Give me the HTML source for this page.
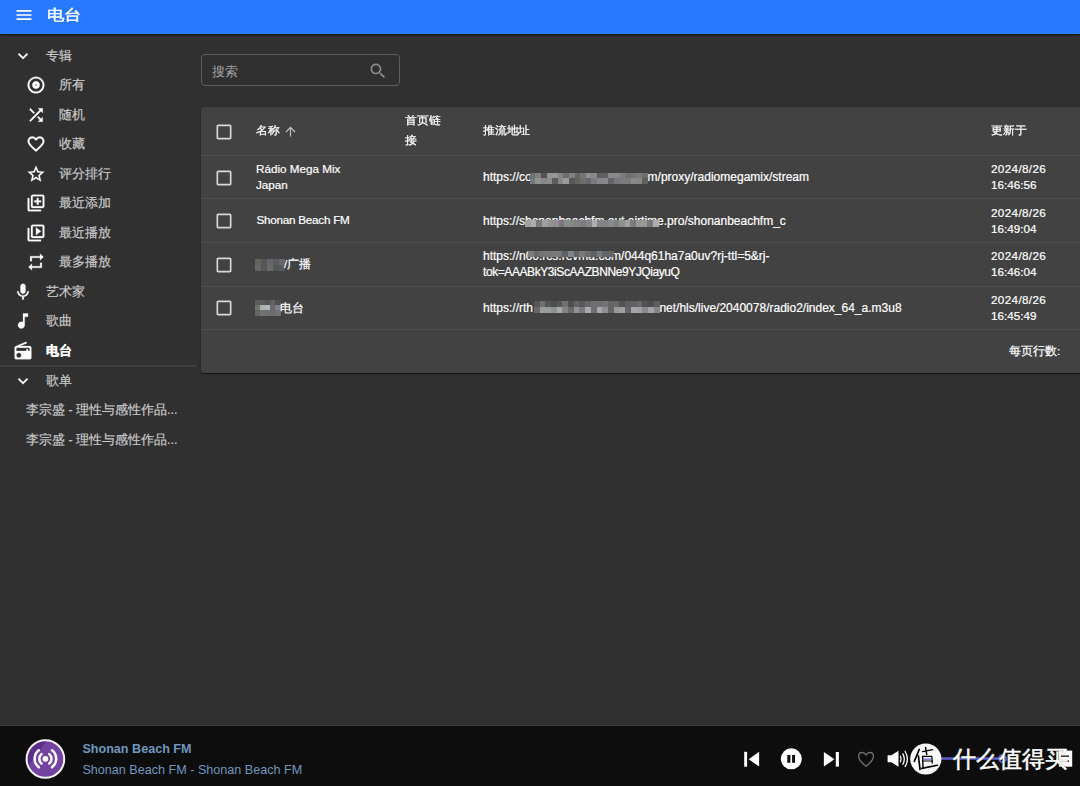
<!DOCTYPE html>
<html><head><meta charset="utf-8">
<style>
*{box-sizing:border-box;margin:0;padding:0}
html,body{width:1080px;height:786px;overflow:hidden;background:#303030;font-family:"Liberation Sans",sans-serif;color:#fff}
.abs{position:absolute}
svg{display:block}
#appbar{position:absolute;left:0;top:0;width:1080px;height:34px;background:#2979ff;border-bottom:1px solid #2a85ff;box-shadow:0 1px 1.5px rgba(20,12,0,.9)}
.side-t{position:absolute;font-size:12.8px;color:#c8c8c8;white-space:nowrap;line-height:16px;-webkit-text-stroke:0.2px #c8c8c8}
.ico{position:absolute;width:20px;height:20px;fill:#fff;stroke:#fff;stroke-width:0.3}
#paper{position:absolute;left:201px;top:106.8px;width:890px;height:266.2px;background:#424242;border-radius:3px;box-shadow:0 2px 1px -1px rgba(0,0,0,.3),0 1px 1px 0 rgba(0,0,0,.24),0 1px 3px 0 rgba(0,0,0,.2)}
.hl{position:absolute;left:201px;width:880px;height:1.6px;background:#4d4d4d}
.cell{position:absolute;font-size:11.7px;line-height:16.2px;color:#fff;white-space:nowrap;-webkit-text-stroke:0.2px #fff}
.url{position:absolute;font-size:12px;line-height:16.2px;color:#fff;white-space:nowrap;-webkit-text-stroke:0.2px #fff}
.dt{letter-spacing:0.35px}
.hdr{position:absolute;font-size:10.9px;line-height:20px;color:#fff;white-space:nowrap;-webkit-text-stroke:0.25px #fff;margin-top:-0.4px;transform:scaleX(1.075);transform-origin:0 0}
.cb{position:absolute;width:20px;height:20px;fill:#d8d8d8}
.mos i{position:absolute;display:block;filter:blur(0.4px)}
#player{position:absolute;left:0;top:725px;width:1080px;height:61px;background:#0d0d0d;border-top:1px solid #3b3b3b}
</style></head><body>
<div id="appbar">
  <svg class="abs" style="left:13.7px;top:4.7px" width="20" height="20" viewBox="0 0 24 24"><path fill="#fff" d="M3 18h18v-2H3v2zm0-5h18v-2H3v2zm0-7v2h18V6H3z"/></svg>
  <div class="abs" style="left:46.8px;top:5px;font-size:15.3px;line-height:20px;color:#fff;-webkit-text-stroke:0.45px #fff;transform:scaleX(1.16);transform-origin:0 0">电台</div>
</div>

<!-- sidebar -->
<svg class="ico" style="left:13px;top:45.6px" viewBox="0 0 24 24"><path d="M16.59 8.59L12 13.17 7.41 8.59 6 10l6 6 6-6z"/></svg>
<div class="side-t" style="left:46px;top:47.5px">专辑</div>

<svg class="ico" style="left:26px;top:75.3px" viewBox="0 0 24 24"><path d="M12 2C6.48 2 2 6.48 2 12s4.48 10 10 10 10-4.48 10-10S17.52 2 12 2zm0 18c-4.41 0-8-3.590-8-8s3.59-8 8-8 8 3.59 8 8-3.59 8-8 8zm0-12.5c-2.49 0-4.5 2.01-4.5 4.5s2.01 4.5 4.5 4.5 4.5-2.01 4.5-4.5-2.01-4.5-4.5-4.5zm0 5.5c-.55 0-1-.45-1-1s.45-1 1-1 1 .45 1 1-.45 1-1 1z"/></svg>
<div class="side-t" style="left:59px;top:77px">所有</div>

<svg class="ico" style="left:26px;top:104.8px" viewBox="0 0 24 24"><path d="M10.59 9.17L5.41 4 4 5.41l5.17 5.17 1.42-1.41zM14.5 4l2.04 2.04L4 18.59 5.41 20 17.96 7.46 20 9.5V4h-5.5zm.33 9.41l-1.41 1.41 3.13 3.13L14.5 20H20v-5.5l-2.04 2.04-3.13-3.130z"/></svg>
<div class="side-t" style="left:59px;top:106.5px">随机</div>

<svg class="ico" style="left:26px;top:134.3px" viewBox="0 0 24 24"><path d="M16.5 3c-1.74 0-3.410.81-4.5 2.09C10.91 3.81 9.24 3 7.5 3 4.42 3 2 5.42 2 8.5c0 3.78 3.4 6.86 8.55 11.54L12 21.35l1.45-1.32C18.6 15.36 22 12.28 22 8.5 22 5.420 19.58 3 16.5 3zm-4.4 15.55l-.1.1-.1-.1C7.14 14.24 4 11.39 4 8.5 4 6.5 5.5 5 7.5 5c1.54 0 3.04.99 3.57 2.36h1.87C13.46 5.99 14.96 5 16.5 5c2 0 3.5 1.5 3.5 3.5 0 2.89-3.14 5.74-7.9 10.05z"/></svg>
<div class="side-t" style="left:59px;top:136px">收藏</div>

<svg class="ico" style="left:26px;top:163.8px" viewBox="0 0 24 24"><path d="M22 9.24l-7.19-.62L12 2 9.19 8.63 2 9.24l5.46 4.73L5.82 21 12 17.27 18.18 21l-1.63-7.03L22 9.24zM12 15.4l-3.76 2.27 1-4.28-3.32-2.88 4.38-.38L12 6.1l1.71 4.04 4.38.38-3.32 2.88 1 4.28L12 15.4z"/></svg>
<div class="side-t" style="left:59px;top:165.5px">评分排行</div>

<svg class="ico" style="left:26px;top:193.3px" viewBox="0 0 24 24"><path d="M4 6H2v14c0 1.1.9 2 2 2h14v-2H4V6zm16-4H8c-1.1 0-2 .9-2 2v12c0 1.1.9 2 2 2h12c1.1 0 2-.9 2-2V4c0-1.1-.9-2-2-2zm0 14H8V4h12v12zm-7-2h2v-3h3V9h-3V6h-2v3h-3v2h3z"/></svg>
<div class="side-t" style="left:59px;top:195px">最近添加</div>

<svg class="ico" style="left:26px;top:222.8px" viewBox="0 0 24 24"><path d="M4 6H2v14c0 1.1.9 2 2 2h14v-2H4V6zm16-4H8c-1.1 0-2 .9-2 2v12c0 1.1.9 2 2 2h12c1.1 0 2-.9 2-2V4c0-1.1-.9-2-2-2zm0 14H8V4h12v12zM12 5.5v9l6-4.5z"/></svg>
<div class="side-t" style="left:59px;top:224.5px">最近播放</div>

<svg class="ico" style="left:26px;top:252.3px" viewBox="0 0 24 24"><path d="M7 7h10v3l4-4-4-4v3H5v6h2V7zm10 10H7v-3l-4 4 4 4v-3h12v-6h-2v4z"/></svg>
<div class="side-t" style="left:59px;top:254px">最多播放</div>

<svg class="ico" style="left:13px;top:281.8px" viewBox="0 0 24 24"><path d="M12 14c1.66 0 2.99-1.34 2.99-3L15 5c0-1.66-1.34-3-3-3S9 3.34 9 5v6c0 1.66 1.34 3 3 3zm5.3-3c0 3-2.54 5.1-5.3 5.1S6.7 14 6.7 11H5c0 3.41 2.72 6.23 6 6.72V21h2v-3.28c3.28-.48 6-3.3 6-6.72h-1.7z"/></svg>
<div class="side-t" style="left:46px;top:283.5px">艺术家</div>

<svg class="ico" style="left:13px;top:311.3px" viewBox="0 0 24 24"><path d="M12 3v10.55c-.59-.34-1.27-.55-2-.55-2.21 0-4 1.79-4 4s1.79 4 4 4 4-1.79 4-4V7h4V3h-6z"/></svg>
<div class="side-t" style="left:46px;top:313px">歌曲</div>

<svg class="ico" style="left:13px;top:340.8px" viewBox="0 0 24 24"><path d="M3.24 6.15C2.51 6.43 2 7.17 2 8v12c0 1.1.89 2 2 2h16c1.11 0 2-.9 2-2V8c0-1.11-.89-2-2-2H8.3l8.26-3.34L15.88 1 3.24 6.15zM7 20c-1.66 0-3-1.34-3-3s1.34-3 3-3 3 1.34 3 3-1.34 3-3 3zm13-8h-2v-2h-2v2H4V8h16v4z"/></svg>
<div class="side-t" style="left:46px;top:342.7px;color:#fff;font-weight:bold;font-size:13.4px;-webkit-text-stroke:0.2px #fff">电台</div>

<div class="abs" style="left:0;top:364.8px;width:197px;height:2.2px;background:#3c3c3c"></div>

<svg class="ico" style="left:13px;top:370.5px" viewBox="0 0 24 24"><path d="M16.59 8.59L12 13.17 7.41 8.59 6 10l6 6 6-6z"/></svg>
<div class="side-t" style="left:46px;top:372.5px">歌单</div>

<div class="side-t" style="left:26px;top:402px;font-size:12.5px">李宗盛 - 理性与感性作品...</div>
<div class="side-t" style="left:26px;top:431.5px;font-size:12.5px">李宗盛 - 理性与感性作品...</div>

<!-- search -->
<div class="abs" style="left:201px;top:54.2px;width:198.6px;height:32.3px;border:1px solid #5e5e5e;border-radius:4px"></div>
<div class="abs" style="left:212px;top:63.5px;font-size:13.3px;line-height:16px;color:#a5a5a5">搜索</div>
<svg class="abs" style="left:368px;top:61px" width="20" height="20" viewBox="0 0 24 24"><path fill="#9a9a9a" stroke="#2f2f2f" stroke-width="0.35" d="M15.5 14h-.79l-.28-.27C15.41 12.59 16 11.11 16 9.5 16 5.91 13.09 3 9.5 3S3 5.91 3 9.5 5.91 16 9.5 16c1.61 0 3.09-.59 4.23-1.57l.27.28v.79l5 4.99L20.49 19l-4.99-5zm-6 0C7.01 14 5 11.99 5 9.5S7.01 5 9.5 5 14 7.01 14 9.5 11.99 14 9.5 14z"/></svg>

<!-- table -->
<div id="paper"></div>
<div class="hl" style="top:154.8px"></div>
<div class="hl" style="top:197.9px"></div>
<div class="hl" style="top:241.7px"></div>
<div class="hl" style="top:285.5px"></div>
<div class="hl" style="top:328.9px"></div>

<svg class="cb" style="left:214px;top:121.8px" viewBox="0 0 24 24"><path d="M19 5v14H5V5h14m0-2H5c-1.1 0-2 .9-2 2v14c0 1.1.9 2 2 2h14c1.1 0 2-.9 2-2V5c0-1.1-.9-2-2-2z"/></svg>
<div class="hdr" style="left:256px;top:120.5px">名称</div>
<svg class="abs" style="left:283.3px;top:124px" width="15" height="15" viewBox="0 0 24 24"><path fill="#bdbdbd" d="M4 12l1.41 1.41L11 7.83V20h2V7.83l5.58 5.59L20 12l-8-8-8 8z"/></svg>
<div class="hdr" style="left:405px;top:110.5px;white-space:normal;width:36px">首页链接</div>
<div class="hdr" style="left:483px;top:120.5px">推流地址</div>
<div class="hdr" style="left:991px;top:120.5px">更新于</div>

<svg class="cb" style="left:214px;top:167.5px" viewBox="0 0 24 24"><path d="M19 5v14H5V5h14m0-2H5c-1.1 0-2 .9-2 2v14c0 1.1.9 2 2 2h14c1.1 0 2-.9 2-2V5c0-1.1-.9-2-2-2z"/></svg>
<div class="cell" style="left:256px;top:161px">Rádio Mega Mix<br>Japan</div>
<div class="url" style="left:483px;top:169px">https://co</div>
<div class="url" style="left:647.6px;top:169px">m/proxy/radiomegamix/stream</div>
<div class="mos"><i style="left:529.6px;top:172.6px;width:6.1px;height:6.1px;background:#6f6f6e"></i><i style="left:535.2px;top:172.6px;width:6.1px;height:6.1px;background:#807f7e"></i><i style="left:540.8px;top:172.6px;width:6.1px;height:6.1px;background:#545153"></i><i style="left:546.5px;top:172.6px;width:6.1px;height:6.1px;background:#94949b"></i><i style="left:552.1px;top:172.6px;width:6.1px;height:6.1px;background:#98969a"></i><i style="left:557.7px;top:172.6px;width:6.1px;height:6.1px;background:#848582"></i><i style="left:563.3px;top:172.6px;width:6.1px;height:6.1px;background:#6f6b73"></i><i style="left:568.9px;top:172.6px;width:6.1px;height:6.1px;background:#837e80"></i><i style="left:574.6px;top:172.6px;width:6.1px;height:6.1px;background:#676562"></i><i style="left:580.2px;top:172.6px;width:6.1px;height:6.1px;background:#797378"></i><i style="left:585.8px;top:172.6px;width:6.1px;height:6.1px;background:#8d8e90"></i><i style="left:591.4px;top:172.6px;width:6.1px;height:6.1px;background:#86888b"></i><i style="left:597.0px;top:172.6px;width:6.1px;height:6.1px;background:#605e5f"></i><i style="left:602.6px;top:172.6px;width:6.1px;height:6.1px;background:#615f63"></i><i style="left:608.3px;top:172.6px;width:6.1px;height:6.1px;background:#8a8989"></i><i style="left:613.9px;top:172.6px;width:6.1px;height:6.1px;background:#868889"></i><i style="left:619.5px;top:172.6px;width:6.1px;height:6.1px;background:#7d7d80"></i><i style="left:625.1px;top:172.6px;width:6.1px;height:6.1px;background:#6c6f6b"></i><i style="left:630.7px;top:172.6px;width:6.1px;height:6.1px;background:#747573"></i><i style="left:636.4px;top:172.6px;width:6.1px;height:6.1px;background:#7a7a78"></i><i style="left:642.0px;top:172.6px;width:6.1px;height:6.1px;background:#6d6e6d"></i><i style="left:529.6px;top:178.2px;width:6.1px;height:6.1px;background:#76767e"></i><i style="left:535.2px;top:178.2px;width:6.1px;height:6.1px;background:#8f9191"></i><i style="left:540.8px;top:178.2px;width:6.1px;height:6.1px;background:#87868b"></i><i style="left:546.5px;top:178.2px;width:6.1px;height:6.1px;background:#8e8b8a"></i><i style="left:552.1px;top:178.2px;width:6.1px;height:6.1px;background:#5b5b58"></i><i style="left:557.7px;top:178.2px;width:6.1px;height:6.1px;background:#878688"></i><i style="left:563.3px;top:178.2px;width:6.1px;height:6.1px;background:#9a9c9c"></i><i style="left:568.9px;top:178.2px;width:6.1px;height:6.1px;background:#585658"></i><i style="left:574.6px;top:178.2px;width:6.1px;height:6.1px;background:#636360"></i><i style="left:580.2px;top:178.2px;width:6.1px;height:6.1px;background:#6e6d70"></i><i style="left:585.8px;top:178.2px;width:6.1px;height:6.1px;background:#6a656b"></i><i style="left:591.4px;top:178.2px;width:6.1px;height:6.1px;background:#7c7b81"></i><i style="left:597.0px;top:178.2px;width:6.1px;height:6.1px;background:#85888b"></i><i style="left:602.6px;top:178.2px;width:6.1px;height:6.1px;background:#88898c"></i><i style="left:608.3px;top:178.2px;width:6.1px;height:6.1px;background:#636568"></i><i style="left:613.9px;top:178.2px;width:6.1px;height:6.1px;background:#777978"></i><i style="left:619.5px;top:178.2px;width:6.1px;height:6.1px;background:#7b7a81"></i><i style="left:625.1px;top:178.2px;width:6.1px;height:6.1px;background:#7c7a79"></i><i style="left:630.7px;top:178.2px;width:6.1px;height:6.1px;background:#8b8988"></i><i style="left:636.4px;top:178.2px;width:6.1px;height:6.1px;background:#868685"></i><i style="left:642.0px;top:178.2px;width:6.1px;height:6.1px;background:#5e5e5f"></i></div>
<div class="cell" style="left:991px;top:161px"><span style="letter-spacing:0.35px">2024/8/26</span><br>16:46:56</div>

<svg class="cb" style="left:214px;top:211px" viewBox="0 0 24 24"><path d="M19 5v14H5V5h14m0-2H5c-1.1 0-2 .9-2 2v14c0 1.1.9 2 2 2h14c1.1 0 2-.9 2-2V5c0-1.1-.9-2-2-2z"/></svg>
<div class="cell" style="left:256.5px;top:211.7px;letter-spacing:-0.25px">Shonan Beach FM</div>
<div class="url" style="left:483px;top:212.5px">https://shonanbeachfm.out.airtime.pro/shonanbeachfm_c</div>
<div class="mos"><i style="left:525.4px;top:219.5px;width:6.0px;height:7.5px;background:#9ea1a2"></i><i style="left:530.9px;top:219.5px;width:6.0px;height:7.5px;background:#acadb0"></i><i style="left:536.4px;top:219.5px;width:6.0px;height:7.5px;background:#7c797a"></i><i style="left:542.0px;top:219.5px;width:6.0px;height:7.5px;background:#9e9fa0"></i><i style="left:547.5px;top:219.5px;width:6.0px;height:7.5px;background:#8f9290"></i><i style="left:553.0px;top:219.5px;width:6.0px;height:7.5px;background:#918d91"></i><i style="left:558.5px;top:219.5px;width:6.0px;height:7.5px;background:#7a767c"></i><i style="left:564.1px;top:219.5px;width:6.0px;height:7.5px;background:#878c8d"></i><i style="left:569.6px;top:219.5px;width:6.0px;height:7.5px;background:#858581"></i><i style="left:575.1px;top:219.5px;width:6.0px;height:7.5px;background:#818185"></i><i style="left:580.6px;top:219.5px;width:6.0px;height:7.5px;background:#7e7d7e"></i><i style="left:586.2px;top:219.5px;width:6.0px;height:7.5px;background:#888385"></i><i style="left:591.7px;top:219.5px;width:6.0px;height:7.5px;background:#adaeb2"></i><i style="left:597.2px;top:219.5px;width:6.0px;height:7.5px;background:#858685"></i><i style="left:602.8px;top:219.5px;width:6.0px;height:7.5px;background:#858187"></i><i style="left:608.3px;top:219.5px;width:6.0px;height:7.5px;background:#888a8f"></i><i style="left:613.8px;top:219.5px;width:6.0px;height:7.5px;background:#808181"></i><i style="left:619.3px;top:219.5px;width:6.0px;height:7.5px;background:#8c908b"></i><i style="left:624.9px;top:219.5px;width:6.0px;height:7.5px;background:#a0a0a1"></i><i style="left:630.4px;top:219.5px;width:6.0px;height:7.5px;background:#7b7b7e"></i><i style="left:635.9px;top:219.5px;width:6.0px;height:7.5px;background:#989596"></i><i style="left:641.4px;top:219.5px;width:6.0px;height:7.5px;background:#969896"></i><i style="left:647.0px;top:219.5px;width:6.0px;height:7.5px;background:#7a787e"></i><i style="left:652.5px;top:219.5px;width:6.0px;height:7.5px;background:#aeabb4"></i></div>
<div class="cell" style="left:991px;top:204.5px"><span style="letter-spacing:0.35px">2024/8/26</span><br>16:49:04</div>

<svg class="cb" style="left:214px;top:254.5px" viewBox="0 0 24 24"><path d="M19 5v14H5V5h14m0-2H5c-1.1 0-2 .9-2 2v14c0 1.1.9 2 2 2h14c1.1 0 2-.9 2-2V5c0-1.1-.9-2-2-2z"/></svg>
<div class="mos"><i style="left:254.5px;top:259.3px;width:6.5px;height:6.1px;background:#626462"></i><i style="left:260.5px;top:259.3px;width:6.5px;height:6.1px;background:#575553"></i><i style="left:266.5px;top:259.3px;width:6.5px;height:6.1px;background:#68646d"></i><i style="left:272.6px;top:259.3px;width:6.5px;height:6.1px;background:#5a5a61"></i><i style="left:278.6px;top:259.3px;width:6.5px;height:6.1px;background:#676869"></i><i style="left:254.5px;top:264.9px;width:6.5px;height:6.1px;background:#696668"></i><i style="left:260.5px;top:264.9px;width:6.5px;height:6.1px;background:#565652"></i><i style="left:266.5px;top:264.9px;width:6.5px;height:6.1px;background:#6b6a68"></i><i style="left:272.6px;top:264.9px;width:6.5px;height:6.1px;background:#515554"></i><i style="left:278.6px;top:264.9px;width:6.5px;height:6.1px;background:#58565e"></i></div>
<div class="cell" style="left:284px;top:256px">/广播</div>
<div class="url" style="left:483px;top:248px">https://n00.rcs.revma.com/044q61ha7a0uv?rj-ttl=5&amp;rj-<br><span style="letter-spacing:-0.42px">tok=AAABkY3iScAAZBNNe9YJQiayuQ</span></div>
<div class="mos"><i style="left:528.0px;top:250.5px;width:6.2px;height:6.8px;background:#7d7b7e"></i><i style="left:533.7px;top:250.5px;width:6.2px;height:6.8px;background:#656a65"></i><i style="left:539.4px;top:250.5px;width:6.2px;height:6.8px;background:#757473"></i><i style="left:545.1px;top:250.5px;width:6.2px;height:6.8px;background:#757572"></i><i style="left:550.8px;top:250.5px;width:6.2px;height:6.8px;background:#75797c"></i><i style="left:556.5px;top:250.5px;width:6.2px;height:6.8px;background:#78787b"></i><i style="left:562.2px;top:250.5px;width:6.2px;height:6.8px;background:#5f6068"></i><i style="left:567.9px;top:250.5px;width:6.2px;height:6.8px;background:#818788"></i><i style="left:573.7px;top:250.5px;width:6.2px;height:6.8px;background:#646366"></i><i style="left:579.4px;top:250.5px;width:6.2px;height:6.8px;background:#767c7b"></i><i style="left:585.1px;top:250.5px;width:6.2px;height:6.8px;background:#6c6b6f"></i><i style="left:590.8px;top:250.5px;width:6.2px;height:6.8px;background:#5f635f"></i><i style="left:596.5px;top:250.5px;width:6.2px;height:6.8px;background:#76797e"></i><i style="left:602.2px;top:250.5px;width:6.2px;height:6.8px;background:#64656b"></i><i style="left:607.9px;top:250.5px;width:6.2px;height:6.8px;background:#676365"></i></div>
<div class="cell" style="left:991px;top:248px"><span style="letter-spacing:0.35px">2024/8/26</span><br>16:46:04</div>

<svg class="cb" style="left:214px;top:298px" viewBox="0 0 24 24"><path d="M19 5v14H5V5h14m0-2H5c-1.1 0-2 .9-2 2v14c0 1.1.9 2 2 2h14c1.1 0 2-.9 2-2V5c0-1.1-.9-2-2-2z"/></svg>
<div class="mos"><i style="left:255.0px;top:299.9px;width:5.6px;height:5.7px;background:#5c5a5e"></i><i style="left:260.1px;top:299.9px;width:5.6px;height:5.7px;background:#5a5c5a"></i><i style="left:265.1px;top:299.9px;width:5.6px;height:5.7px;background:#535155"></i><i style="left:270.2px;top:299.9px;width:5.6px;height:5.7px;background:#60625f"></i><i style="left:275.2px;top:299.9px;width:5.6px;height:5.7px;background:#4e4d4e"></i><i style="left:255.0px;top:305.1px;width:5.6px;height:5.7px;background:#70726d"></i><i style="left:260.1px;top:305.1px;width:5.6px;height:5.7px;background:#b0b0b0"></i><i style="left:265.1px;top:305.1px;width:5.6px;height:5.7px;background:#b0b6b9"></i><i style="left:270.2px;top:305.1px;width:5.6px;height:5.7px;background:#69696d"></i><i style="left:275.2px;top:305.1px;width:5.6px;height:5.7px;background:#837f87"></i><i style="left:255.0px;top:310.3px;width:5.6px;height:5.7px;background:#646565"></i><i style="left:260.1px;top:310.3px;width:5.6px;height:5.7px;background:#6f7373"></i><i style="left:265.1px;top:310.3px;width:5.6px;height:5.7px;background:#6c716e"></i><i style="left:270.2px;top:310.3px;width:5.6px;height:5.7px;background:#6f6c71"></i><i style="left:275.2px;top:310.3px;width:5.6px;height:5.7px;background:#767075"></i></div>
<div class="cell" style="left:280.3px;top:299.5px">电台</div>
<div class="url" style="left:483px;top:299.5px">https://rth</div>
<div class="url" style="left:659.4px;top:299.5px">net/hls/live/2040078/radio2/index_64_a.m3u8</div>
<div class="mos"><i style="left:533.8px;top:301.2px;width:6.2px;height:6.1px;background:#555856"></i><i style="left:539.5px;top:301.2px;width:6.2px;height:6.1px;background:#6d716f"></i><i style="left:545.2px;top:301.2px;width:6.2px;height:6.1px;background:#565654"></i><i style="left:550.9px;top:301.2px;width:6.2px;height:6.1px;background:#4b4f4f"></i><i style="left:556.6px;top:301.2px;width:6.2px;height:6.1px;background:#555858"></i><i style="left:562.3px;top:301.2px;width:6.2px;height:6.1px;background:#726e73"></i><i style="left:568.0px;top:301.2px;width:6.2px;height:6.1px;background:#4c5251"></i><i style="left:573.7px;top:301.2px;width:6.2px;height:6.1px;background:#646262"></i><i style="left:579.4px;top:301.2px;width:6.2px;height:6.1px;background:#555957"></i><i style="left:585.2px;top:301.2px;width:6.2px;height:6.1px;background:#686669"></i><i style="left:590.9px;top:301.2px;width:6.2px;height:6.1px;background:#6f7073"></i><i style="left:596.6px;top:301.2px;width:6.2px;height:6.1px;background:#6c6e71"></i><i style="left:602.3px;top:301.2px;width:6.2px;height:6.1px;background:#727372"></i><i style="left:608.0px;top:301.2px;width:6.2px;height:6.1px;background:#646467"></i><i style="left:613.7px;top:301.2px;width:6.2px;height:6.1px;background:#666769"></i><i style="left:619.4px;top:301.2px;width:6.2px;height:6.1px;background:#525053"></i><i style="left:625.1px;top:301.2px;width:6.2px;height:6.1px;background:#5d5c5f"></i><i style="left:630.8px;top:301.2px;width:6.2px;height:6.1px;background:#5d6064"></i><i style="left:636.6px;top:301.2px;width:6.2px;height:6.1px;background:#676a6a"></i><i style="left:642.3px;top:301.2px;width:6.2px;height:6.1px;background:#545152"></i><i style="left:648.0px;top:301.2px;width:6.2px;height:6.1px;background:#4a4c4f"></i><i style="left:653.7px;top:301.2px;width:6.2px;height:6.1px;background:#5b6062"></i><i style="left:533.8px;top:306.9px;width:6.2px;height:6.1px;background:#67676e"></i><i style="left:539.5px;top:306.9px;width:6.2px;height:6.1px;background:#9e9b9c"></i><i style="left:545.2px;top:306.9px;width:6.2px;height:6.1px;background:#9a9b9a"></i><i style="left:550.9px;top:306.9px;width:6.2px;height:6.1px;background:#8e9293"></i><i style="left:556.6px;top:306.9px;width:6.2px;height:6.1px;background:#a8a8a6"></i><i style="left:562.3px;top:306.9px;width:6.2px;height:6.1px;background:#848283"></i><i style="left:568.0px;top:306.9px;width:6.2px;height:6.1px;background:#6a6b67"></i><i style="left:573.7px;top:306.9px;width:6.2px;height:6.1px;background:#929394"></i><i style="left:579.4px;top:306.9px;width:6.2px;height:6.1px;background:#7a797b"></i><i style="left:585.2px;top:306.9px;width:6.2px;height:6.1px;background:#a8a9ab"></i><i style="left:590.9px;top:306.9px;width:6.2px;height:6.1px;background:#6c6e72"></i><i style="left:596.6px;top:306.9px;width:6.2px;height:6.1px;background:#aba6ae"></i><i style="left:602.3px;top:306.9px;width:6.2px;height:6.1px;background:#918c95"></i><i style="left:608.0px;top:306.9px;width:6.2px;height:6.1px;background:#626363"></i><i style="left:613.7px;top:306.9px;width:6.2px;height:6.1px;background:#979797"></i><i style="left:619.4px;top:306.9px;width:6.2px;height:6.1px;background:#a19f9e"></i><i style="left:625.1px;top:306.9px;width:6.2px;height:6.1px;background:#636364"></i><i style="left:630.8px;top:306.9px;width:6.2px;height:6.1px;background:#a4a4a9"></i><i style="left:636.6px;top:306.9px;width:6.2px;height:6.1px;background:#9ea2a1"></i><i style="left:642.3px;top:306.9px;width:6.2px;height:6.1px;background:#8c868d"></i><i style="left:648.0px;top:306.9px;width:6.2px;height:6.1px;background:#a6a2a4"></i><i style="left:653.7px;top:306.9px;width:6.2px;height:6.1px;background:#858786"></i></div>
<div class="cell" style="left:991px;top:291.5px"><span style="letter-spacing:0.35px">2024/8/26</span><br>16:45:49</div>

<div class="cell" style="left:1009px;top:343px">每页行数:</div>

<!-- player -->
<div id="player"></div>
<svg class="abs" style="left:25px;top:739px" width="41" height="41" viewBox="0 0 41 41">
  <defs><clipPath id="cc"><circle cx="20.4" cy="20" r="19"/></clipPath></defs>
  <circle cx="20.4" cy="20" r="19" fill="#7443a1"/>
  <path clip-path="url(#cc)" d="M0 0H23L4 26L0 26Z" fill="#5b2f89"/>
  <circle cx="20.4" cy="20" r="18.8" fill="none" stroke="#f4f4f4" stroke-width="2"/>
  <g fill="none" stroke="#fff" stroke-width="2.5" stroke-linecap="round">
    <path d="M16.48 15.13A6.1 6.1 0 0 0 16.48 24.47"/>
    <path d="M24.32 15.13A6.1 6.1 0 0 1 24.32 24.47"/>
    <path d="M13.75 11.29A10.8 10.8 0 0 0 13.75 28.31"/>
    <path d="M27.05 11.29A10.8 10.8 0 0 1 27.05 28.31"/>
  </g>
  <circle cx="20.4" cy="19.8" r="2.9" fill="#fff"/>
</svg>
<div class="abs" style="left:82.4px;top:742px;font-size:12.6px;line-height:14px;font-weight:bold;color:#7097be;white-space:nowrap">Shonan Beach FM</div>
<div class="abs" style="left:82.4px;top:763.3px;font-size:12.6px;line-height:14px;color:#7097be;white-space:nowrap">Shonan Beach FM - Shonan Beach FM</div>
<svg class="abs" style="left:0;top:726px" width="1080" height="60" viewBox="0 726 1080 60">
  <rect x="744.2" y="751.8" width="2.9" height="14.9" fill="#fff"/>
  <path d="M748.7 759.3L759.1 751.8V766.6Z" fill="#fff"/>
  <circle cx="791.3" cy="758.8" r="10.5" fill="#fff"/>
  <rect x="787.3" y="755" width="3.1" height="7.8" fill="#0d0d0d"/>
  <rect x="792.1" y="755" width="2.9" height="7.8" fill="#0d0d0d"/>
  <path d="M823.9 752V766.6L834.4 759.3Z" fill="#fff"/>
  <rect x="835.8" y="752" width="3.1" height="14.6" fill="#fff"/>
  <path d="M866 766.3C866 766.3 858.6 760.6 858.6 756.3C858.6 753.8 860.3 752.5 862.2 752.5C863.8 752.5 865.2 753.5 866 754.8C866.8 753.5 868.2 752.5 869.8 752.5C871.7 752.5 873.4 753.8 873.4 756.3C873.4 760.6 866 766.3 866 766.3Z" fill="none" stroke="#707070" stroke-width="1.3"/>
  <path d="M887.6 755.3H891.4L898.5 750.7V766.8L891.4 762.3H887.6Z" fill="#fff"/>
  <path d="M900.3 755.8Q902 759 900.3 762.2" fill="none" stroke="#fff" stroke-width="1.3"/>
  <path d="M902.6 753.4Q906 759 902.6 764.6" fill="none" stroke="#fff" stroke-width="1.3"/>
  <path d="M904.9 751Q909.8 759 904.9 767" fill="none" stroke="#fff" stroke-width="1.3"/>
  <rect x="920" y="757.2" width="82" height="2.6" fill="#5b5bc9"/>
  <circle cx="1002.5" cy="758.6" r="3.6" fill="none" stroke="#6a6ad6" stroke-width="1.6"/>
  <rect x="1058.9" y="750.6" width="13.3" height="16.1" fill="#fff"/><rect x="1061" y="755.5" width="8" height="1.3" fill="#111"/><rect x="1061" y="760.5" width="8" height="1.3" fill="#111"/>
  <circle cx="925.8" cy="759" r="15.6" fill="#fff" fill-opacity="0.98"/>
</svg>
<svg class="abs" style="left:0;top:726px" width="1080" height="60" viewBox="0 726 1080 60"><g fill="none" stroke="#000" stroke-linecap="round" stroke-linejoin="round">
  <path d="M919.2 749.5L914.3 761.3" stroke-width="1.7"/>
  <path d="M918.4 755.8L920 769.4" stroke-width="1.7"/>
  <path d="M922.6 751.6L932.6 749.6" stroke-width="1.4"/>
  <path d="M925.6 747.6L926.7 754.4" stroke-width="1.5"/>
  <path d="M922.6 756.4L923 767.6" stroke-width="1.4"/>
  <path d="M922.6 756.3H931.8L932.3 763" stroke-width="1.3"/>
  <path d="M923 761H932" stroke-width="1.1"/>
  <path d="M921.8 768.4L937.4 765.3" stroke-width="1.6"/>
</g><rect x="922.8" y="758.4" width="9.4" height="1.5" fill="#5b5bc9" fill-opacity="0.8"/></svg>
<div class="abs" style="left:953px;top:745.5px;font-size:23.2px;line-height:26px;color:#fff;white-space:nowrap;-webkit-text-stroke:0.5px #fff;text-shadow:0 0 1px #000">什么值得买</div>
</body></html>
